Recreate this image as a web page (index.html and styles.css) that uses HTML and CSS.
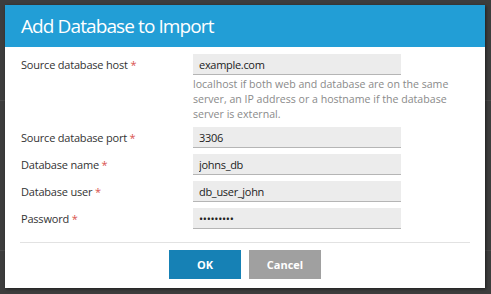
FILE: index.html
```html
<!DOCTYPE html>
<html lang="en">
  <head>
    <meta charset="UTF-8" />
    <title>Add Database to Import</title>
    <link rel="stylesheet" href="styles.css">
  </head>
  <body>
    <div class="dialog">
      <div class="dialog-header">
        <h1>Add Database to Import</h1>
      </div>

      <form class="dialog-body">
        <div class="row">
          <label>Source database host <span class="req">*</span></label>
          <div class="field">
            <input type="text" value="example.com" />
            <p class="hint">
              localhost if both web and database are on the same server, an IP
              address or a hostname if the database server is external.
            </p>
          </div>
        </div>
        <div class="row">
          <label>Source database port <span class="req">*</span></label>
          <div class="field"><input type="text" value="3306" /></div>
        </div>
        <div class="row">
          <label>Database name <span class="req">*</span></label>
          <div class="field"><input type="text" value="johns_db" /></div>
        </div>
        <div class="row">
          <label>Database user <span class="req">*</span></label>
          <div class="field"><input type="text" value="db_user_john" /></div>
        </div>
        <div class="row">
          <label>Password <span class="req">*</span></label>
          <div class="field"><input type="password" value="secretpw1" /></div>
        </div>

        <div class="buttons">
          <button type="submit" class="ok">OK</button>
          <button type="button" class="cancel">Cancel</button>
        </div>
      </form>
    </div>
  </body>
</html>
```

FILE: styles.css
```css
body {
  margin: 0;
  padding: 5px 0 0 5px;
  height: 294px;
  box-sizing: border-box;
  font-family: "Open Sans", sans-serif;
  background-color: #3d3d3d;
  background-image:
    linear-gradient(#4a4a4a, #4a4a4a),
    linear-gradient(#4a4a4a, #4a4a4a);
  background-size: 100% 1px, 100% 1px;
  background-position: 0 100px, 0 250px;
  background-repeat: no-repeat;
  overflow: hidden;
}
.dialog {
  width: 480px;
  height: 283px;
  background: #fff;
  box-shadow: 1px 1px 3px rgba(0, 0, 0, 0.5);
}
.dialog-header {
  height: 42px;
  background: #229ed6;
  padding-left: 16px;
  display: flex;
  align-items: center;
}
.dialog-header h1 {
  margin: 0;
  font-size: 19px;
  letter-spacing: -0.9px;
  font-weight: normal;
  color: #fff;
}
.dialog-body {
  padding: 7px 15px 0 15px;
}
.row {
  display: grid;
  grid-template-columns: 173px 208px;
  margin-bottom: 6px;
}
.row label {
  padding-left: 1px;
  font-size: 11px;
  letter-spacing: -0.2px;
  line-height: 21px;
  color: #333;
}
.req {
  color: #d9534f;
}
input {
  display: block;
  width: 100%;
  height: 21px;
  box-sizing: border-box;
  padding: 0 6px;
  border: none;
  border-bottom: 1px solid #b5b5b5;
  background: #ececec;
  font-family: "Open Sans", sans-serif;
  font-size: 11px;
  letter-spacing: -0.3px;
  color: #222;
}
.hint {
  width: 258px;
  margin: 2px 0 -1px 0;
  font-size: 10.6px;
  line-height: 15px;
  color: #8a8a8a;
}
.buttons {
  margin-top: 13px;
  border-top: 1px solid #e2e2e2;
  padding-top: 7px;
  display: flex;
  justify-content: center;
  gap: 8px;
}
button {
  width: 72px;
  height: 29px;
  border: none;
  font-family: "Open Sans", sans-serif;
  font-size: 11px;
  font-weight: bold;
  color: #fff;
  cursor: pointer;
}
button.ok {
  background: #1681b5;
}
button.cancel {
  background: #a0a0a0;
}
```
